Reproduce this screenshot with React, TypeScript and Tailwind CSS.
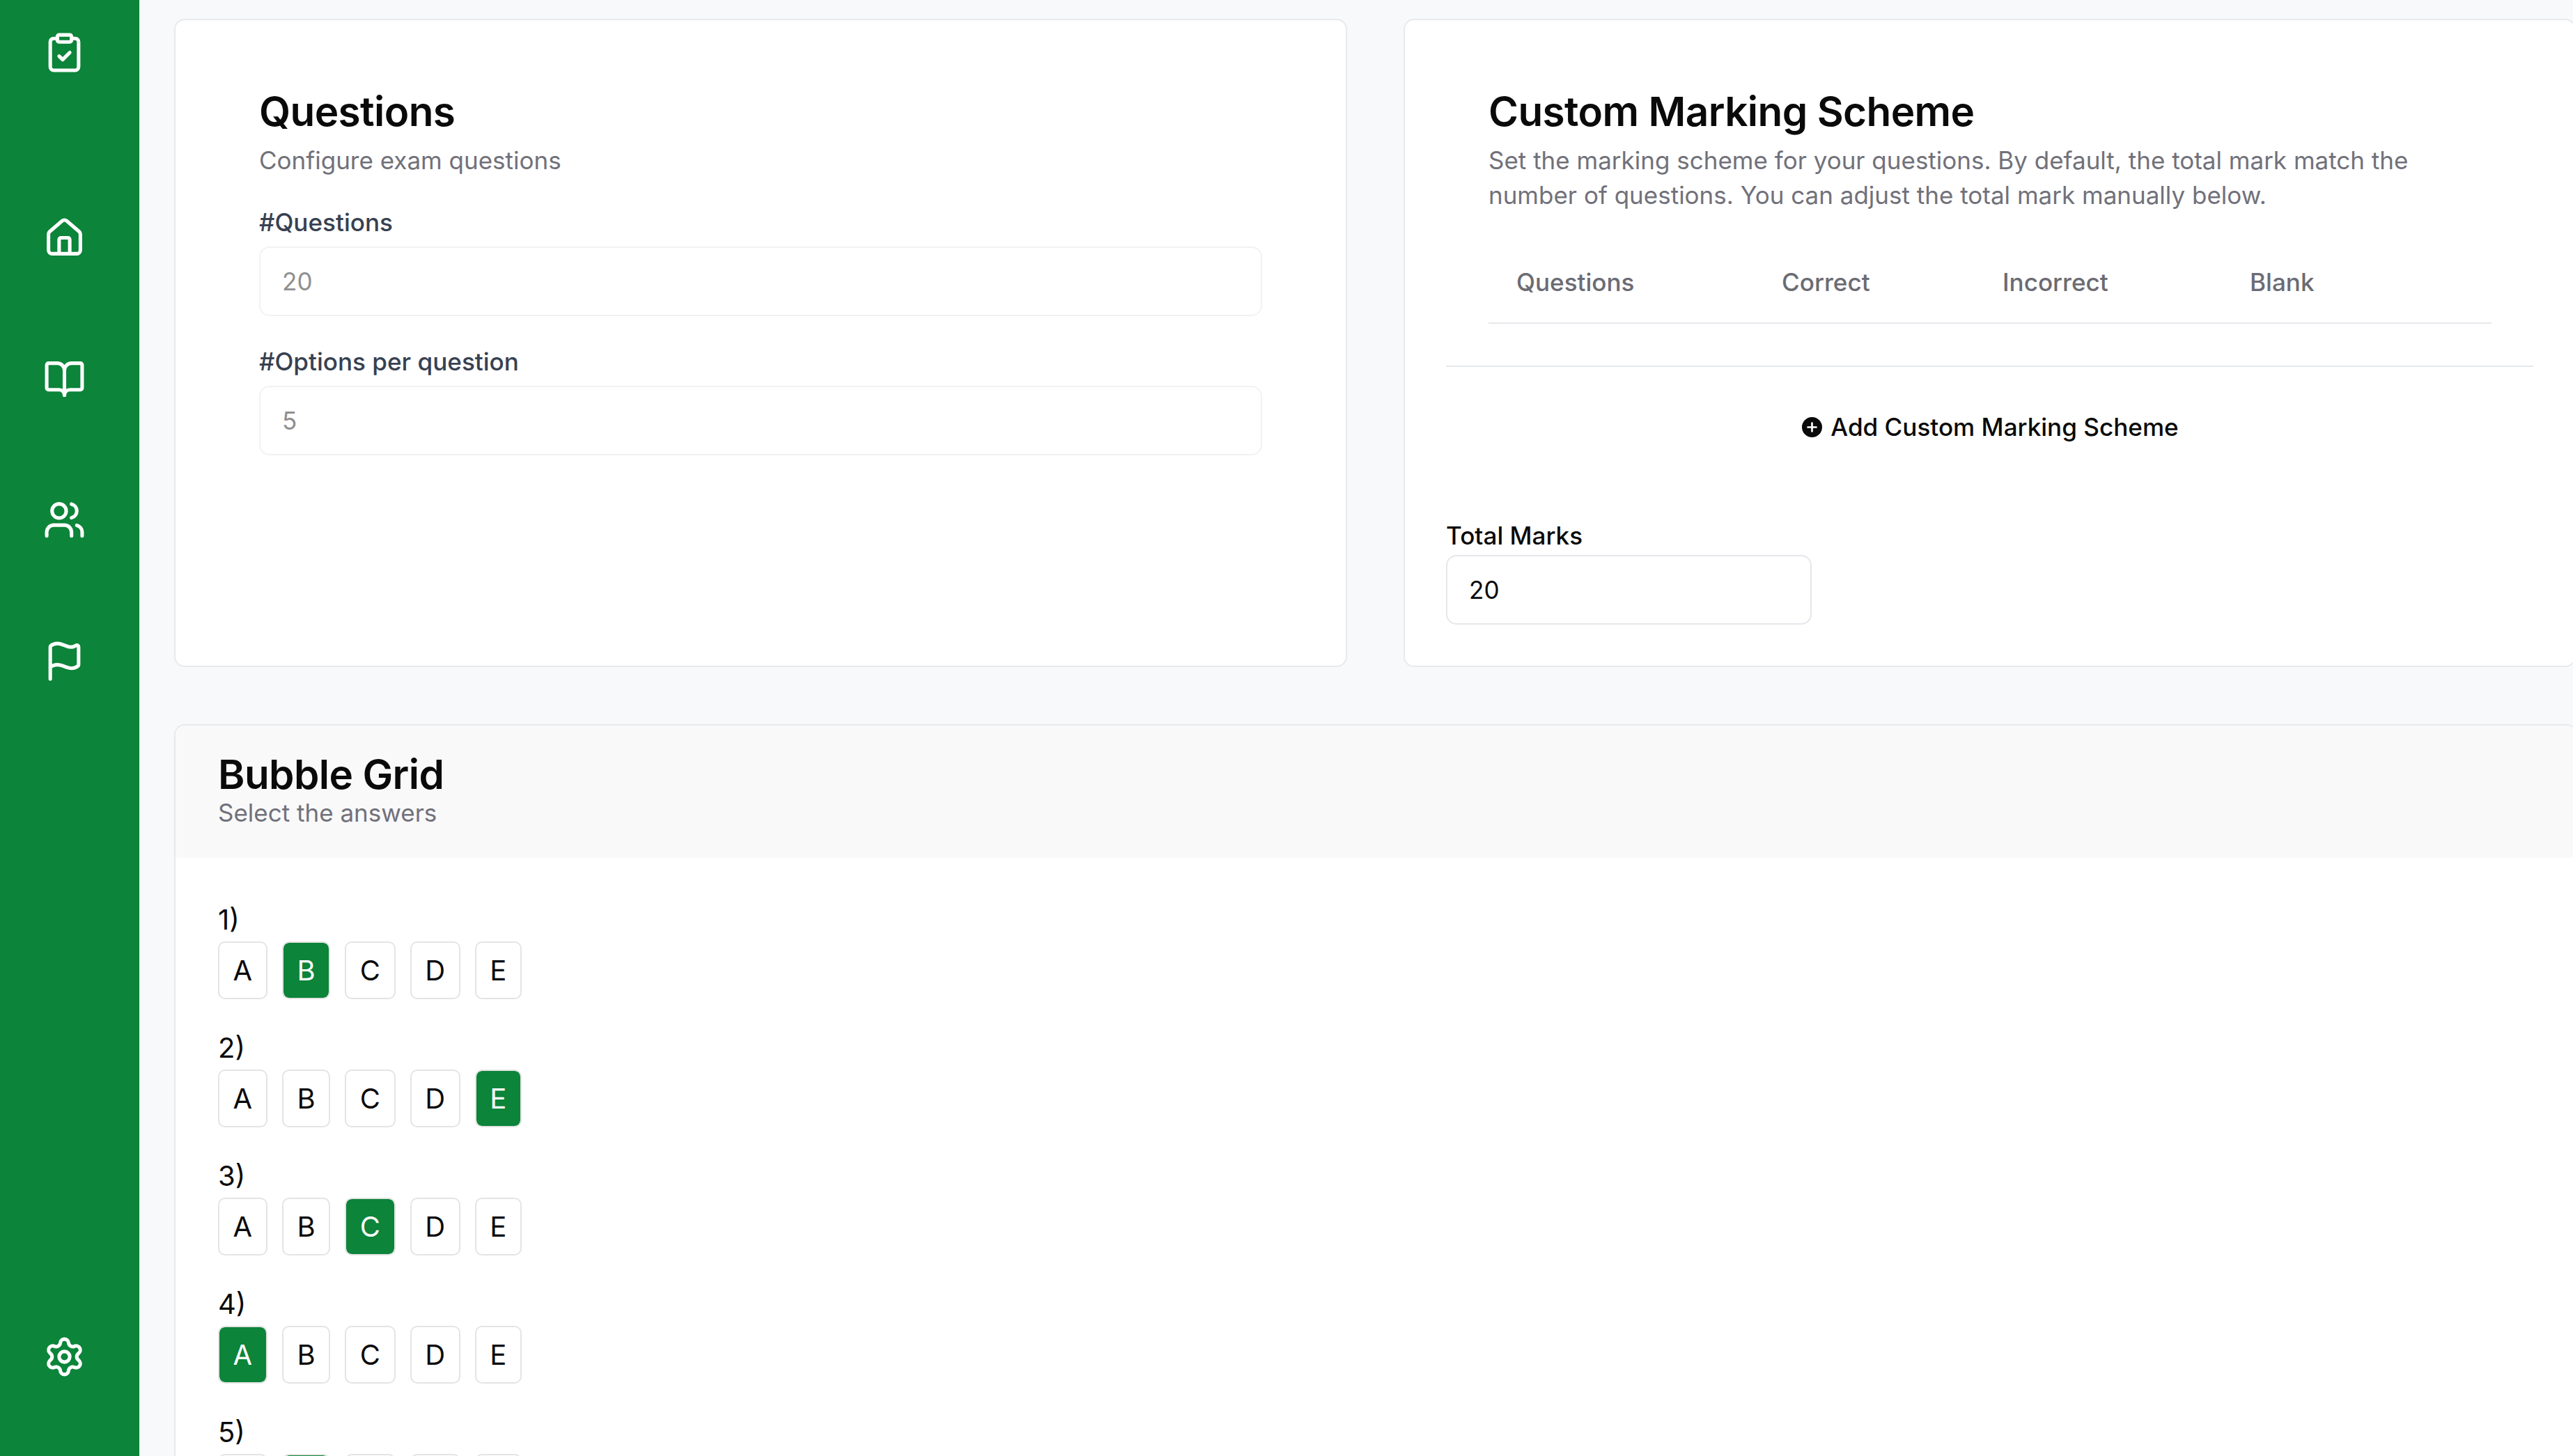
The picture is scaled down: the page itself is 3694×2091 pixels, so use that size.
import { BookOpen, ClipboardCheck, Flag, House, Settings, Users } from 'lucide-react'

const NAV_ITEMS = [House, BookOpen, Users, Flag]
const OPTIONS = ['A', 'B', 'C', 'D', 'E']
const ANSWERS = ['B', 'E', 'C', 'A', 'B']

function PlusCircle() {
  return (
    <svg viewBox="0 0 24 24" className="w-[29px] h-[29px] shrink-0">
      <circle cx="12" cy="12" r="12" fill="#0a0a0a" />
      <path d="M12 7v10M7 12h10" stroke="#fff" strokeWidth="2.2" strokeLinecap="round" />
    </svg>
  )
}

function Sidebar() {
  return (
    <aside className="w-[200px] shrink-0 h-full bg-[#0c8439] text-white flex flex-col items-center pt-[45px] pb-[112px] pr-[15px]">
      <ClipboardCheck size={61} strokeWidth={2} />
      <nav className="flex flex-col items-center gap-[141.6px] mt-[205px]">
        {NAV_ITEMS.map((Icon, i) => (
          <Icon key={i} size={61} strokeWidth={2} />
        ))}
      </nav>
      <Settings size={61} strokeWidth={2} className="mt-auto" />
    </aside>
  )
}

function CardHeading({ title, children }: { title: string; children: React.ReactNode }) {
  return (
    <div>
      <h2 className="text-[58.4px] leading-[72px] font-semibold tracking-[-0.6px] text-[#0a0a0a]">{title}</h2>
      <p className="mt-[9px] text-[35px] leading-[50px] text-[#71717a]">{children}</p>
    </div>
  )
}

function ConfigField({ label, value, className }: { label: string; value: string; className: string }) {
  return (
    <div className={className}>
      <label className="block text-[35.1px] leading-[40px] font-medium text-[#374151]">{label}</label>
      <input
        readOnly
        value={value}
        className="mt-[15px] block w-full h-[100px] rounded-[15px] border-2 border-[#f1f2f3] px-[31px] text-[35.1px] text-[#8f8f8f] outline-none"
      />
    </div>
  )
}

function QuestionsCard() {
  return (
    <section className="h-[931px] bg-white rounded-[15px] border-2 border-[#e8e9eb] pt-[95px] pl-[120px] pr-[120px]">
      <CardHeading title="Questions">Configure exam questions</CardHeading>
      <ConfigField label="#Questions" value="20" className="mt-[44px]" />
      <ConfigField label="#Options per question" value="5" className="mt-[45px]" />
    </section>
  )
}

function MarkingCard() {
  return (
    <section className="h-[931px] bg-white rounded-[15px] border-2 border-[#e8e9eb] pt-[95px] px-[59px]">
      <div className="px-[61px]">
        <CardHeading title="Custom Marking Scheme">
          Set the marking scheme for your questions. By default, the total mark match the number of questions. You can
          adjust the total mark manually below.
        </CardHeading>
        <table className="mt-[42px] w-[1440px] table-fixed border-b-2 border-[#e5e7eb]">
          <thead>
            <tr className="h-[117px] text-left text-[35.1px] text-[#6b6b73]">
              <th className="w-[421px] pl-[40px] font-medium">Questions</th>
              <th className="w-[317px] font-medium">Correct</th>
              <th className="w-[355px] font-medium">Incorrect</th>
              <th className="font-medium">Blank</th>
            </tr>
          </thead>
        </table>
      </div>
      <div className="mt-[60px] border-t-2 border-[#e5e7eb]">
        <button className="mt-[37px] mx-auto flex h-[98px] items-center gap-[12px] pl-[2px] text-[35.1px] font-medium text-[#0a0a0a]">
          <PlusCircle />
          Add Custom Marking Scheme
        </button>
      </div>
      <label className="block mt-[87px] text-[35.1px] leading-[40px] font-medium text-[#0a0a0a]">Total Marks</label>
      <input
        readOnly
        value="20"
        className="mt-[8px] block w-[525px] h-[100px] rounded-[15px] border-2 border-[#e5e7eb] px-[31px] text-[35.1px] text-[#0a0a0a] outline-none"
      />
    </section>
  )
}

function OptionButton({ letter, selected }: { letter: string; selected: boolean }) {
  return (
    <button
      className={
        selected
          ? 'h-[83px] px-[19.6px] rounded-[10px] border-2 border-[#e4e4e4] bg-[#0c8439] bg-clip-padding text-[40px] text-white'
          : 'h-[83px] px-[19.6px] rounded-[10px] border-2 border-[#e4e4e4] bg-white text-[40px] text-[#0a0a0a]'
      }
    >
      {letter}
    </button>
  )
}

function BubbleGrid() {
  return (
    <section className="mt-[82px] w-[3450px] bg-white rounded-t-[15px] border-2 border-[#e8e9eb] overflow-hidden">
      <header className="bg-[#f9f9fa] pt-[39px] pb-[41px] px-[61px]">
        <h2 className="text-[58.4px] leading-[62px] font-semibold tracking-[-0.6px] text-[#0a0a0a]">Bubble Grid</h2>
        <p className="text-[35px] leading-[48px] text-[#71717a]">Select the answers</p>
      </header>
      <div className="pt-[64px] px-[61px] flex flex-col gap-[45px]">
        {ANSWERS.map((answer, i) => (
          <div key={i}>
            <div className="text-[40px] leading-[50px] text-[#0a0a0a]">{i + 1})</div>
            <div className="mt-[6px] flex gap-[21px]">
              {OPTIONS.map((letter) => (
                <OptionButton key={letter} letter={letter} selected={letter === answer} />
              ))}
            </div>
          </div>
        ))}
      </div>
    </section>
  )
}

export default function App() {
  return (
    <div className="flex h-screen w-screen overflow-hidden bg-[#f8f9fb] font-['Inter',sans-serif]">
      <Sidebar />
      <main className="flex-1 min-w-0 overflow-hidden pt-[27px] pl-[50px]">
        <div className="grid grid-cols-[1684px_1683px] gap-[81px]">
          <QuestionsCard />
          <MarkingCard />
        </div>
        <BubbleGrid />
      </main>
    </div>
  )
}
